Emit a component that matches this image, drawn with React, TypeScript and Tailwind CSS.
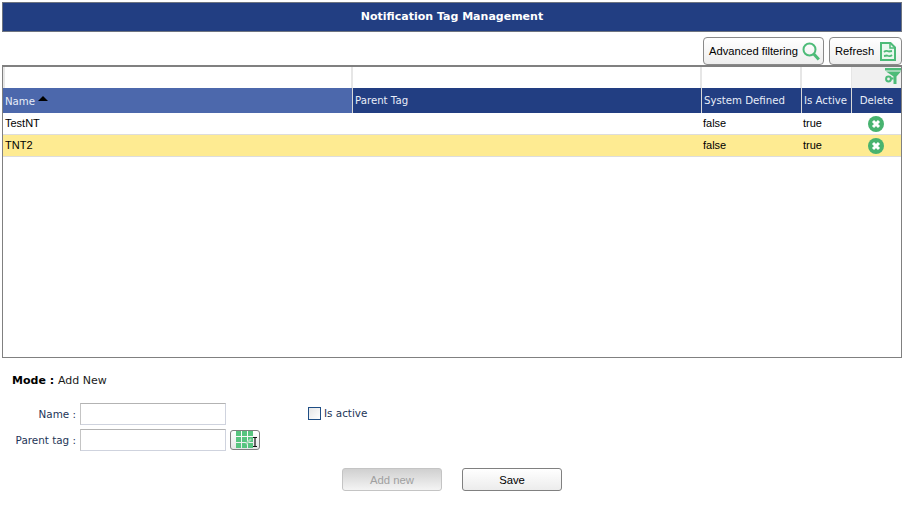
import React from 'react';

const cols = 'grid grid-cols-[350px_349px_100px_50px_49px]';
const verdana = 'font-["DejaVu_Sans",sans-serif]';
const arial = 'font-["Liberation_Sans",sans-serif]';

const rows = [
  { name: 'TestNT', system: 'false', active: 'true', bg: 'bg-white' },
  { name: 'TNT2', system: 'false', active: 'true', bg: 'bg-[#feeb92]' },
];

const DeleteIcon = () => (
  <svg width="16" height="16" viewBox="0 0 16 16">
    <circle cx="8" cy="8" r="8" fill="#48b36f" />
    <path d="M5 5l6 6M11 5l-6 6" stroke="#fff" strokeWidth="3" />
  </svg>
);

const SearchIcon = () => (
  <svg width="18" height="19" viewBox="0 0 18 19" fill="none" stroke="#4dbb78">
    <circle cx="7.5" cy="7.5" r="6" strokeWidth="2" />
    <path d="M11.800 12l5 5.600" strokeWidth="3" />
  </svg>
);

const RefreshIcon = () => (
  <svg width="16" height="19" viewBox="0 0 16 19" fill="none">
    <path d="M1 1h9.500L15 5.500V18H1z" fill="#eaf8ef" stroke="#4dbb78" strokeWidth="2" />
    <path d="M10 1v5h5" stroke="#4dbb78" strokeWidth="1.500" />
    <path d="M4 10c2-2 4-1 5-.5l3-.5M12 13c-2 2-4 1-5 .5l-3 .5" stroke="#4dbb78" strokeWidth="1.800" />
  </svg>
);

const FunnelIcon = () => (
  <svg width="16" height="16" viewBox="0 0 16 16">
    <path d="M0 0h16v2.500H0zM1 3.500h15L11.500 8.500V16H8.500V8.500z" fill="#4dbb78" />
    <circle cx="3.500" cy="11" r="2.400" fill="none" stroke="#4dbb78" strokeWidth="2" />
    <path d="M5.500 10.500h3" stroke="#4dbb78" strokeWidth="2" />
  </svg>
);

const GridIcon = () => (
  <svg width="22" height="17" viewBox="0 0 22 17">
    <path d="M0 0h5v5H0zM6 0h5v5H6zM12 0h5v5h-5zM0 6h5v5H0zM6 6h5v5H6zM12 6h5v5h-5zM0 12h5v5H0zM6 12h5v5H6zM12 12h5v5h-5z" fill="#58c47f" />
    <path d="M10 13l5-5" stroke="#a8dcb8" strokeWidth="2" />
    <path d="M17 6.500h4M19 6.500v9M17 15.500h4" stroke="#111" strokeWidth="1.200" fill="none" />
  </svg>
);

const ToolButton = ({ label, icon, className }: { label: string; icon: React.ReactNode; className: string }) => (
  <button className={`h-[28px] flex items-center justify-between whitespace-nowrap rounded-[4px] border border-[#8a8a8a] bg-gradient-to-b from-white to-[#eeeeee] text-[11.2px] text-black ${arial} ${className}`}>
    <span>{label}</span>
    {icon}
  </button>
);

const HeaderCell = ({ children, className = '' }: { children: React.ReactNode; className?: string }) => (
  <div className={`h-[25px] flex items-center px-[2px] whitespace-nowrap text-[10.2px] text-[#e8edf8] border-r border-[#d8d8d8] last:border-r-0 ${verdana} ${className}`}>
    {children}
  </div>
);

const FieldLabel = ({ children }: { children: React.ReactNode }) => (
  <label className={`w-[74px] pt-[2px] text-right text-[10.4px] text-[#1d3557] ${verdana}`}>{children}</label>
);

const TextField = () => (
  <input className="w-[146px] h-[22px] bg-white border border-[#cfd3de] border-t-[#b3b3b3] border-l-[#c4c4c4]" />
);

export default function App() {
  return (
    <div className="w-[912px] h-[511px] bg-white pt-[2px] pl-[2px] overflow-hidden">
      <div className="w-[900px]">
        {/* Title */}
        <div className={`h-[30px] flex items-center justify-center bg-[#223e82] border border-[#6e7480] text-white text-[11px] font-bold ${verdana}`}>
          Notification Tag Management
        </div>

        {/* Toolbar */}
        <div className="h-[33px] flex items-start justify-end gap-[5px] pt-[5px]">
          <ToolButton label="Advanced filtering" icon={<SearchIcon />} className="w-[121px] pl-[5px] pr-[3px]" />
          <ToolButton label="Refresh" icon={<RefreshIcon />} className="w-[73px] pl-[5px] pr-[5px]" />
        </div>

        {/* Grid */}
        <div className="h-[293px] border border-[#808080] border-t-2">
          <div className={`${cols} h-[21px]`}>
            <div className="border-l-2 border-r-2 border-[#e6e6e6]" />
            <div className="border-r-2 border-[#e6e6e6]" />
            <div className="border-r-2 border-[#e6e6e6]" />
            <div className="border-r border-[#e6e6e6]" />
            <div className="bg-[#f0f0f0] flex justify-end items-start pt-[1px]">
              <FunnelIcon />
            </div>
          </div>
          <div className={`${cols} bg-[#223e82]`}>
            <HeaderCell className="bg-[#4c68ac]">
              <span className="mt-[2px]">Name</span>
              <svg width="10" height="5" viewBox="0 0 10 5" className="ml-[3px] mb-[5px]">
                <path d="M0 5L5 0l5 5z" fill="#000" />
              </svg>
            </HeaderCell>
            <HeaderCell>Parent Tag</HeaderCell>
            <HeaderCell>System Defined</HeaderCell>
            <HeaderCell className="px-[1px]">Is Active</HeaderCell>
            <HeaderCell className="justify-center">Delete</HeaderCell>
          </div>
          {rows.map((row) => (
            <div key={row.name} className={`${cols} ${row.bg} h-[22px] items-center border-b border-[#dddddd] text-[11px] text-black ${arial}`}>
              <div className="px-[2px]">{row.name}</div>
              <div />
              <div className="px-[1px]">{row.system}</div>
              <div className="px-[1px]">{row.active}</div>
              <div className="flex justify-center pr-[2px]">
                <DeleteIcon />
              </div>
            </div>
          ))}
        </div>

        {/* Form */}
        <div className={`mt-[15px] ml-[10px] text-[11px] text-[#1a1a1a] ${verdana}`}>
          <span className="font-bold text-black">Mode : </span>Add New
        </div>
        <div className="mt-[13px] flex flex-col gap-[4px]">
          <div className="flex items-center gap-[4px]">
            <FieldLabel>Name :</FieldLabel>
            <TextField />
            <div className={`ml-[78px] flex items-center gap-[3px] pt-[1px] text-[10.4px] text-[#1d3557] ${verdana}`}>
              <span className="w-[13px] h-[13px] border border-[#1f4e85] bg-gradient-to-br from-[#e6e6e6] to-white" />
              Is active
            </div>
          </div>
          <div className="flex items-center gap-[4px]">
            <FieldLabel>Parent tag :</FieldLabel>
            <TextField />
            <button className="w-[30px] h-[20px] flex items-center pl-[5px] rounded-[3px] border border-[#808080] bg-gradient-to-b from-white to-[#e6e6e6]">
              <GridIcon />
            </button>
          </div>
        </div>
        <div className={`mt-[17px] flex justify-center gap-[20px] text-[11.300px] ${arial}`}>
          <button className="w-[100px] h-[23px] pt-[2px] rounded-[3px] border border-[#c4c4c4] bg-gradient-to-b from-[#d0d0d0] to-[#f4f4f4] text-[#a0a0a0]">Add new</button>
          <button className="w-[100px] h-[23px] pt-[2px] rounded-[3px] border border-[#808080] bg-gradient-to-b from-white to-[#ececec] text-black">Save</button>
        </div>
      </div>
    </div>
  );
}
